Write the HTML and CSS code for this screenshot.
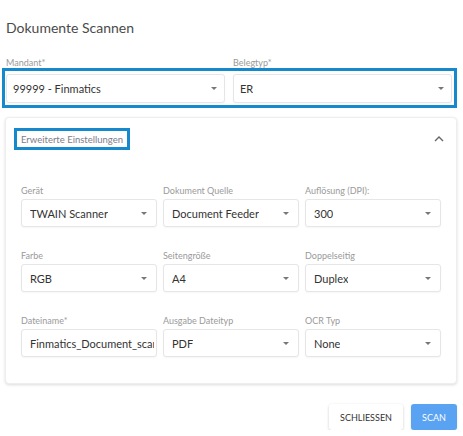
FILE: index.html
```html
<!DOCTYPE html>
<html lang="de">
<head>
<meta charset="utf-8">
<title>Dokumente Scannen</title>
<link rel="stylesheet" href="styles.css">
</head>
<body>
<div class="dialog">
  <h1 class="title">Dokumente Scannen</h1>

  <div class="main-labels">
    <div class="label">Mandant*</div>
    <div class="label">Belegtyp*</div>
  </div>
  <div class="highlight-row">
    <div class="select main">
      <span class="value">99999 - Finmatics</span>
      <span class="arrow"></span>
    </div>
    <div class="select main">
      <span class="value">ER</span>
      <span class="arrow"></span>
    </div>
  </div>

  <div class="card">
    <div class="card-header">
      <div class="section-title">Erweiterte Einstellungen</div>
      <svg class="chevron" width="10" height="6" viewBox="0 0 10 6"><polyline points="1,5 5,1 9,5" fill="none" stroke="#666" stroke-width="1.4"/></svg>
    </div>

    <div class="grid">
      <div class="field">
        <div class="label">Gerät</div>
        <div class="select"><span class="value">TWAIN Scanner</span><span class="arrow"></span></div>
      </div>
      <div class="field">
        <div class="label">Dokument Quelle</div>
        <div class="select"><span class="value">Document Feeder</span><span class="arrow"></span></div>
      </div>
      <div class="field">
        <div class="label">Auflösung (DPI):</div>
        <div class="select"><span class="value">300</span><span class="arrow"></span></div>
      </div>

      <div class="field">
        <div class="label">Farbe</div>
        <div class="select"><span class="value">RGB</span><span class="arrow"></span></div>
      </div>
      <div class="field">
        <div class="label">Seitengröße</div>
        <div class="select"><span class="value">A4</span><span class="arrow"></span></div>
      </div>
      <div class="field">
        <div class="label">Doppelseitig</div>
        <div class="select"><span class="value">Duplex</span><span class="arrow"></span></div>
      </div>

      <div class="field">
        <div class="label">Dateiname*</div>
        <div class="select input"><span class="value">Finmatics_Document_scan</span></div>
      </div>
      <div class="field">
        <div class="label">Ausgabe Dateityp</div>
        <div class="select"><span class="value">PDF</span><span class="arrow"></span></div>
      </div>
      <div class="field">
        <div class="label">OCR Typ</div>
        <div class="select"><span class="value">None</span><span class="arrow"></span></div>
      </div>
    </div>
  </div>

  <div class="actions">
    <button class="btn btn-close">SCHLIESSEN</button>
    <button class="btn btn-scan">SCAN</button>
  </div>
</div>
</body>
</html>
```

FILE: styles.css
```css
* { box-sizing: border-box; }

html, body {
  margin: 0;
  padding: 0;
  background: #fff;
}

body {
  font-family: Lato, "Open Sans", "Liberation Sans", sans-serif;
  color: #333;
}

.dialog {
  width: 463px;
  padding: 17px 6px 0 2px;
}

.title {
  margin: 0;
  padding-left: 4px;
  font-size: 14px;
  line-height: 22px;
  font-weight: 400;
  color: #4a4a4a;
}

.label {
  font-size: 9px;
  line-height: 11px;
  color: #9a9a9a;
  white-space: nowrap;
}

.main-labels {
  margin-top: 18px;
  display: grid;
  grid-template-columns: minmax(0, 1fr) minmax(0, 1fr);
  column-gap: 8px;
  padding: 0 5px 0 4px;
}

.highlight-row {
  display: grid;
  grid-template-columns: minmax(0, 1fr) minmax(0, 1fr);
  column-gap: 8px;
  border: 3px solid #1689cc;
  padding: 3px 2px 2px 1px;
  height: 40px;
}

.select {
  display: flex;
  align-items: center;
  justify-content: space-between;
  height: 28px;
  padding: 0 8px 0 8px;
  background: #fff;
  border: 1px solid #e6e6e6;
  border-radius: 3px;
  box-shadow: 0 1px 2px rgba(0, 0, 0, 0.04);
  font-size: 11px;
  color: #333;
  overflow: hidden;
}

.select.main {
  height: 29px;
  padding: 0 6px 0 6px;
}

.select .value {
  white-space: nowrap;
  overflow: hidden;
}

.select.input {
  justify-content: flex-start;
  padding-right: 2px;
}

.arrow {
  flex: none;
  width: 0;
  height: 0;
  border-left: 3px solid transparent;
  border-right: 3px solid transparent;
  border-top: 3px solid #777;
  margin-right: 1px;
}

.card {
  margin: 9px 0 0 3px;
  background: #fff;
  border: 1px solid #eeeeee;
  border-radius: 4px;
  box-shadow: 0 1px 3px rgba(0, 0, 0, 0.14);
  padding: 10px 15px 26px 15px;
}

.card-header {
  display: flex;
  align-items: center;
  justify-content: space-between;
  margin-left: -7px;
}

.section-title {
  border: 3px solid #1689cc;
  height: 22px;
  padding: 0 4px;
  display: flex;
  align-items: center;
  font-size: 9.5px;
  color: #7c7c8c;
  white-space: nowrap;
}

.chevron {
  display: block;
  margin-right: -3px;
}

.grid {
  margin-top: 35px;
  display: grid;
  grid-template-columns: minmax(0, 1fr) minmax(0, 1fr) minmax(0, 1fr);
  column-gap: 6px;
  row-gap: 23px;
}

.field .label {
  margin-bottom: 3px;
}
.field .select {
  height: 28px;
}

.actions {
  display: flex;
  justify-content: flex-end;
  gap: 8px;
  margin-top: 20px;
}

.btn {
  font-family: Lato, "Open Sans", "Liberation Sans", sans-serif;
  height: 26px;
  border: none;
  border-radius: 3px;
  font-size: 9px;
  padding: 0;
  cursor: pointer;
}

.btn-close {
  width: 74px;
  background: #fff;
  color: #333;
  box-shadow: 0 1px 3px rgba(0, 0, 0, 0.2);
}

.btn-scan {
  width: 46px;
  background: #5aa2f2;
  color: #fff;
  box-shadow: 0 1px 2px rgba(0, 0, 0, 0.15);
}
```
